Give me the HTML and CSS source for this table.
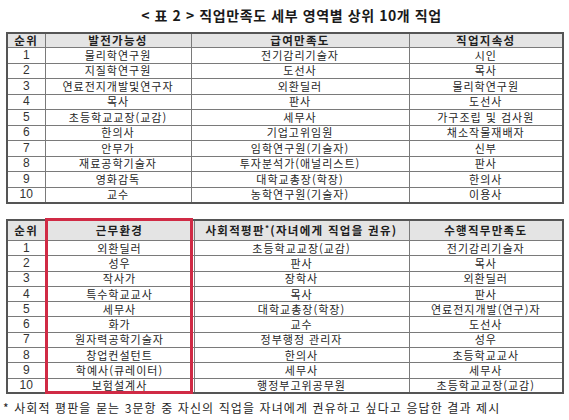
FILE: index.html
```html
<!DOCTYPE html>
<html lang="ko">
<head>
<meta charset="utf-8">
<link rel="stylesheet" href="styles.css">
</head>
<body>
<div class="page">
  <h1 class="title">&lt; 표 2 &gt; 직업만족도 세부 영역별 상위 10개 직업</h1>
  <table class="grid t1">
    <colgroup><col class="c1"><col class="c2"><col class="c3"><col class="c4"></colgroup>
    <thead><tr><th>순위</th><th>발전가능성</th><th>급여만족도</th><th>직업지속성</th></tr></thead>
    <tbody>
      <tr><td class="n">1</td><td>물리학연구원</td><td>전기감리기술자</td><td>시인</td></tr>
      <tr><td class="n">2</td><td>지질학연구원</td><td>도선사</td><td>목사</td></tr>
      <tr><td class="n">3</td><td>연료전지개발및연구자</td><td>외환딜러</td><td>물리학연구원</td></tr>
      <tr><td class="n">4</td><td>목사</td><td>판사</td><td>도선사</td></tr>
      <tr><td class="n">5</td><td>초등학교교장(교감)</td><td>세무사</td><td>가구조립 및 검사원</td></tr>
      <tr><td class="n">6</td><td>한의사</td><td>기업고위임원</td><td>채소작물재배자</td></tr>
      <tr><td class="n">7</td><td>안무가</td><td>임학연구원(기술자)</td><td>신부</td></tr>
      <tr><td class="n">8</td><td>재료공학기술자</td><td>투자분석가(애널리스트)</td><td>판사</td></tr>
      <tr><td class="n">9</td><td>영화감독</td><td>대학교총장(학장)</td><td>한의사</td></tr>
      <tr><td class="n">10</td><td>교수</td><td>농학연구원(기술자)</td><td>이용사</td></tr>
    </tbody>
  </table>
  <div class="t2wrap">
    <table class="grid t2">
      <colgroup><col class="d1"><col class="d2"><col class="d3"><col class="d4"></colgroup>
      <thead><tr><th>순위</th><th>근무환경</th><th class="wide">사회적평판<sup>*</sup>(자녀에게 직업을 권유)</th><th>수행직무만족도</th></tr></thead>
      <tbody>
        <tr><td class="n">1</td><td>외환딜러</td><td>초등학교교장(교감)</td><td>전기감리기술자</td></tr>
        <tr><td class="n">2</td><td>성우</td><td>판사</td><td>목사</td></tr>
        <tr><td class="n">3</td><td>작사가</td><td>장학사</td><td>외환딜러</td></tr>
        <tr><td class="n">4</td><td>특수학교교사</td><td>목사</td><td>판사</td></tr>
        <tr><td class="n">5</td><td>세무사</td><td>대학교총장(학장)</td><td>연료전지개발(연구)자</td></tr>
        <tr><td class="n">6</td><td>화가</td><td>교수</td><td>도선사</td></tr>
        <tr><td class="n">7</td><td>원자력공학기술자</td><td>정부행정 관리자</td><td>성우</td></tr>
        <tr><td class="n">8</td><td>창업컨설턴트</td><td>한의사</td><td>초등학교교사</td></tr>
        <tr><td class="n">9</td><td>학예사(큐레이터)</td><td>세무사</td><td>세무사</td></tr>
        <tr><td class="n">10</td><td>보험설계사</td><td>행정부고위공무원</td><td>초등학교교장(교감)</td></tr>
      </tbody>
    </table>
    <div class="highlight"></div>
  </div>
  <p class="note">* 사회적 평판을 묻는 3문항 중 자신의 직업을 자녀에게 권유하고 싶다고 응답한 결과 제시</p>
</div>
</body>
</html>
```
FILE: styles.css
```css
html, body {
  margin: 0;
  padding: 0;
  background: #ffffff;
}
.page {
  width: 569px;
  height: 420px;
  padding: 0 0 0 6px;
  box-sizing: border-box;
  font-family: "Noto Sans CJK KR", "Noto Sans", sans-serif;
  color: #262626;
}
.title {
  margin: 0;
  height: 32px;
  line-height: 30px;
  font-size: 14px;
  font-weight: bold;
  text-align: center;
  color: #1a1a1a;
  padding-left: 8px;
  letter-spacing: 0.6px;
}
.grid {
  border-collapse: collapse;
  table-layout: fixed;
  width: 556px;
  border: 2px solid #555;
}
.grid th, .grid td {
  border: 1px solid #7a7a7a;
  padding: 0;
  text-align: center;
  white-space: nowrap;
  overflow: hidden;
  font-size: 11px;
  letter-spacing: 1px;
  line-height: 13px;
}
.grid th {
  background: #e4e4e4;
  font-weight: bold;
  font-size: 11.5px;
  color: #1e1e1e;
  letter-spacing: 1.3px;
}
.grid td.n {
  font-family: "Liberation Sans", Arial, sans-serif;
  font-size: 12px;
  letter-spacing: 0;
  color: #333;
}
.c1 { width: 38px; }
.c2 { width: 146px; }
.c3 { width: 218px; }
.c4 { width: 154px; }
.t1 thead tr { height: 14px; }
.t1 tbody tr { height: 15.5px; }
.t2wrap {
  position: relative;
  margin-top: 15px;
  width: 556px;
}
.d1 { width: 38px; }
.d2 { width: 149px; }
.d3 { width: 215px; }
.d4 { width: 154px; }
.t2 thead tr { height: 21px; }
.t2 tbody tr { height: 15.3px; }
.t2 th.wide { letter-spacing: 1.3px; }
.t2 sup {
  font-size: 8px;
  vertical-align: 4px;
  line-height: 0;
}
.highlight {
  position: absolute;
  left: 39px;
  top: -1px;
  width: 148px;
  height: 176px;
  border: 3px solid #d02a45;
  box-sizing: border-box;
  pointer-events: none;
}
.note {
  margin: 6px 0 0 -3px;
  font-size: 12px;
  line-height: 16px;
  color: #262626;
  letter-spacing: 1.1px;
}
```
